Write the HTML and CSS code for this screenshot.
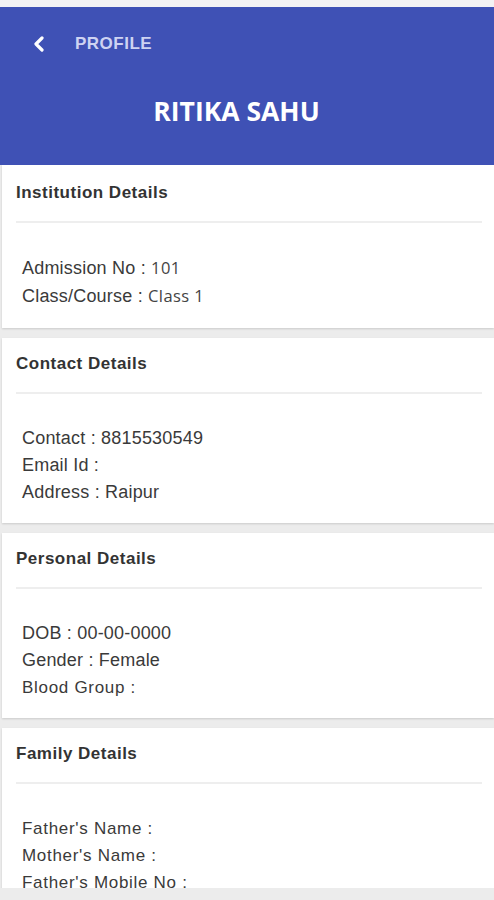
FILE: index.html
```html
<!doctype html>
<html lang="en">
<head>
  <meta charset="UTF-8">
  <meta name="viewport" content="width=device-width, initial-scale=1">
  <title>Profile</title>
  <link rel="stylesheet" href="styles.css">
</head>
<body>
  <div class="strip"></div>
  <header class="appbar">
    <div class="bar-top">
      <a class="back" href="#">
        <svg width="14" height="16" viewBox="0 0 14 16"><path d="M10 2 L4 8 L10 14" fill="none" stroke="#fff" stroke-width="3.2" stroke-linecap="round" stroke-linejoin="round"/></svg>
      </a>
      <span class="bar-label">PROFILE</span>
    </div>
    <h1 class="name">RITIKA SAHU</h1>
  </header>

  <main class="list">
    <section class="card first">
      <h2 class="card-title">Institution Details</h2>
      <hr class="divider">
      <div class="rows">
        <p>Admission No : <span class="val">101</span></p>
        <p>Class/Course : <span class="val">Class 1</span></p>
      </div>
    </section>

    <section class="card">
      <h2 class="card-title">Contact Details</h2>
      <hr class="divider">
      <div class="rows">
        <p>Contact : 8815530549</p>
        <p>Email Id :</p>
        <p>Address : Raipur</p>
      </div>
    </section>

    <section class="card">
      <h2 class="card-title">Personal Details</h2>
      <hr class="divider">
      <div class="rows">
        <p>DOB : 00-00-0000</p>
        <p>Gender : Female</p>
        <p class="small">Blood Group :</p>
      </div>
    </section>

    <section class="card">
      <h2 class="card-title">Family Details</h2>
      <hr class="divider">
      <div class="rows">
        <p class="small">Father's Name :</p>
        <p class="small">Mother's Name :</p>
        <p class="small">Father's Mobile No :</p>
      </div>
    </section>
  </main>
</body>
</html>
```

FILE: styles.css
```css
*{
  box-sizing: border-box;
}
body{
  margin: 0;
  background: #ececec;
  font-family: "Liberation Sans", Arial, sans-serif;
  color: #333;
}
.strip{
  height: 7px;
  background: #f3f2f4;
}
.appbar{
  height: 158px;
  background: #3f51b5;
  color: #fff;
}
.bar-top{
  height: 74px;
  display: flex;
  align-items: center;
  padding-left: 32px;
}
.back{
  display: flex;
  width: 43px;
}
.bar-label{
  font-size: 17px;
  font-weight: bold;
  color: #ced3f2;
  letter-spacing: 0.5px;
}
.name{
  margin: 0;
  height: 60px;
  line-height: 60px;
  text-align: center;
  padding-right: 21px;
  font-family: "Open Sans", sans-serif;
  font-size: 26.5px;
  font-weight: 700;
}

.list{
  height: 723px;
  overflow: hidden;
  display: flex;
  flex-direction: column;
  gap: 10px;
}
.card{
  flex: none;
  margin-left: 2px;
  background: #fff;
  box-shadow: 0 1px 2px rgba(0,0,0,0.14);
  padding: 16px 0 17px;
}
.card.first{
  padding: 18px 0 18px;
}
.card-title{
  margin: 0 0 18px 14px;
  line-height: 20px;
  font-size: 17px;
  font-weight: bold;
  letter-spacing: 0.5px;
  color: #333;
}
.divider{
  margin: 0 12px 0 14px;
  border: 0;
  border-top: 2px solid #eeeeee;
}
.rows{
  padding: 31px 0 0 20px;
}
.rows p{
  margin: 0;
  line-height: 27px;
  font-size: 18px;
  letter-spacing: 0.2px;
  color: #3a3a3a;
}
.rows p.small{
  font-size: 17px;
  letter-spacing: 0.7px;
}
.val{
  font-family: "Open Sans", sans-serif;
  font-size: 16.5px;
  letter-spacing: 0.4px;
  color: #444;
}
```
